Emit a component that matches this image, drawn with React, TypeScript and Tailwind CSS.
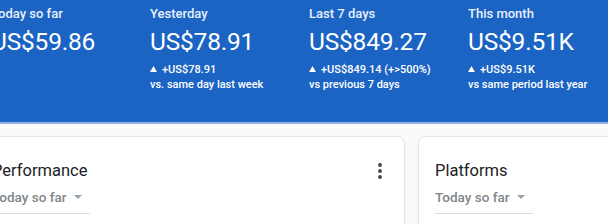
import React from "react";

const stats = [
  { label: "Today so far", value: "US$59.86", l1: "", l2: "" },
  { label: "Yesterday", value: "US$78.91", l1: "+US$78.91", l2: "vs. same day last week" },
  { label: "Last 7 days", value: "US$849.27", l1: "+US$849.14 (+>500%)", l2: "vs previous 7 days" },
  { label: "This month", value: "US$9.51K", l1: "+US$9.51K", l2: "vs same period last year" },
];

function Up() {
  return (
    <svg width="7" height="6" viewBox="0 0 7 6" className="mr-[5px] mb-[1px]">
      <path d="M3.5 0 L7 6 L0 6 Z" fill="#ffffff" />
    </svg>
  );
}

function Dropdown() {
  return (
    <div className="w-[98px] border-b border-[#dadce0] mt-[5px]">
      <div className="flex items-center h-[20px] text-[13.5px] leading-[20px] text-[#80868b] font-medium pb-[6px] box-content">
        <span>Today so far</span>
        <svg width="8" height="4" viewBox="0 0 8 4" className="ml-[7px]">
          <path d="M0 0 L8 0 L4 4 Z" fill="#9aa0a6" />
        </svg>
      </div>
    </div>
  );
}

export default function App() {
  return (
    <div
      className="w-[608px] h-[224px] overflow-hidden bg-[#fafafa]"
      style={{ fontFamily: "Roboto, 'Liberation Sans', sans-serif" }}
    >
      <div className="bg-[#1b64c4] h-[124px] border-b-2 border-[#8db3e8]">
        <div className="-ml-[9px] grid grid-cols-[159px_159px_159px_159px] text-white pt-[6px]">
          {stats.map((s) => (
            <div key={s.label} className="flex flex-col">
              <div className="text-[13px] leading-[16px] font-medium text-[#e8f0fd]">{s.label}</div>
              <div className="text-[24.5px] leading-[28px] mt-[6px] tracking-[-0.2px]">{s.value}</div>
              {s.l1 && (
                <div className="mt-[6px] text-[11px] leading-[15px] font-medium flex items-center">
                  <Up />
                  {s.l1}
                </div>
              )}
              {s.l2 && <div className="text-[11px] leading-[15px] font-medium">{s.l2}</div>}
            </div>
          ))}
        </div>
      </div>
      <div className="-ml-[25px] mt-[12px] flex gap-[13px]">
        <div className="w-[430px] h-[120px] bg-white rounded-[8px] border border-[#e3e3e3] shadow-[0_1px_2px_rgba(0,0,0,0.08)] pl-[16px] pr-[22px] pt-[23px] shrink-0">
          <div className="flex items-center justify-between">
            <div className="text-[16.5px] leading-[22px] text-[#202124]">Performance</div>
            <svg width="4" height="16" viewBox="0 0 4 16">
              <circle cx="2" cy="2" r="1.9" fill="#3c4043" />
              <circle cx="2" cy="8" r="1.9" fill="#3c4043" />
              <circle cx="2" cy="14" r="1.9" fill="#3c4043" />
            </svg>
          </div>
          <Dropdown />
        </div>
        <div className="w-[300px] h-[120px] bg-white rounded-[8px] border border-[#e3e3e3] shadow-[0_1px_2px_rgba(0,0,0,0.08)] pl-[16px] pt-[23px] shrink-0">
          <div className="text-[16.5px] leading-[22px] text-[#202124]">Platforms</div>
          <Dropdown />
        </div>
      </div>
    </div>
  );
}
